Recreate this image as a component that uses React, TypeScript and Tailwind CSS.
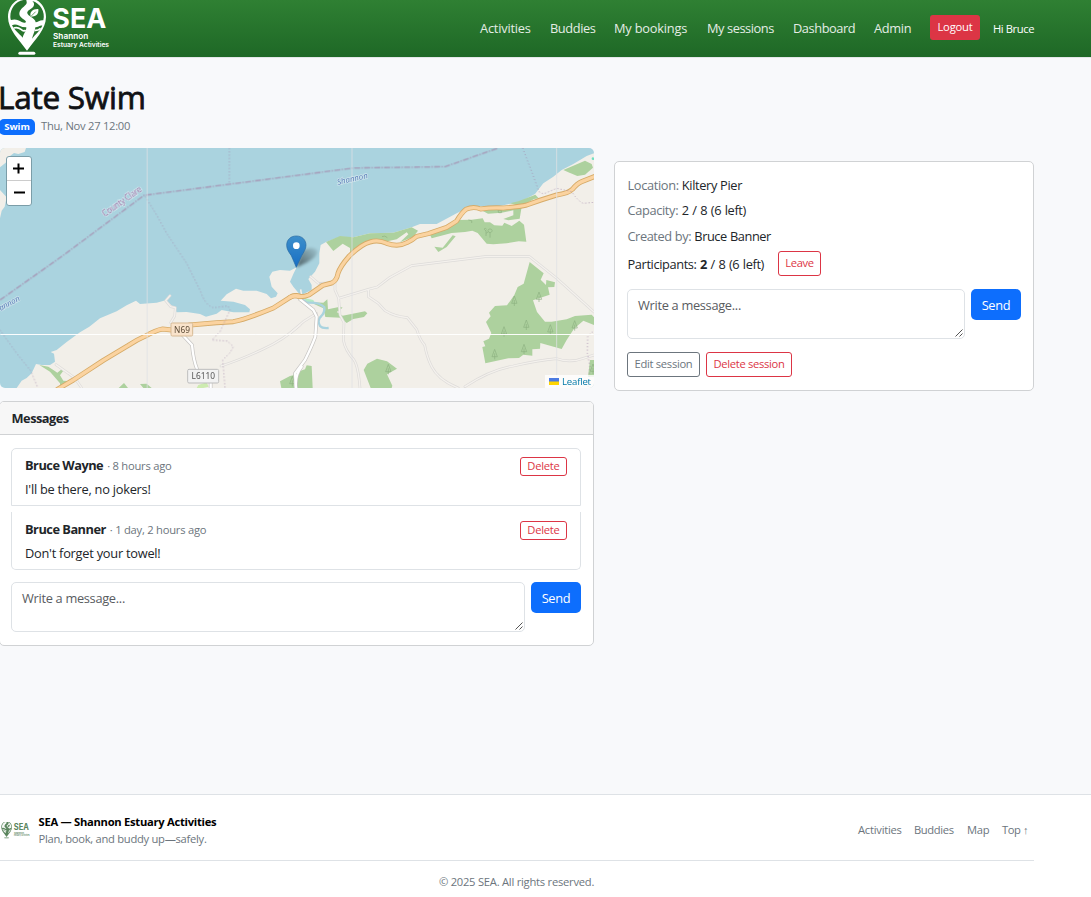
import type { ReactNode } from "react";

function LogoArt({ className, color, ground }: { className: string; color: string; ground: string }) {
  return (
    <svg viewBox="20 0 310 171" className={className} preserveAspectRatio="none">
      <path d="M80 -7C47 -7 23 18 23 51C23 88 55 118 80 152C105 118 137 88 137 51C137 18 113 -7 80 -7Z" fill={color} />
      <path d="M78 -1C49 0 30 22 30 50C30 54 31 58 32 60C45 56 54 60 64 66C70 69 76 69 77 65C74 58 58 54 57 42C57 26 75 20 79 10C80 5 77 1 78 -1Z" fill={ground} />
      <path d="M96 3C104 10 102 19 94 25C85 31 78 35 82 42C89 52 104 54 106 67C112 66 121 59 129 61C136 35 119 9 96 3Z" fill={ground} />
      <path d="M35 76C47 70 57 78 66 81L78 82C78 94 70 100 67 113C57 101 42 91 35 76Z" fill={ground} />
      <path d="M105 82C111 83 119 75 126 77C120 91 105 103 95 116C98 104 104 95 105 82Z" fill={ground} />
      <path d="M91 50C87 36 97 26 114 27C116 44 105 50 91 50Z" fill={color} />
      <path d="M92 49L106 35" stroke={ground} strokeWidth="2" />
      <path d="M40 84Q52 80 62 88T76 90M103 91Q112 92 121 85" stroke={color} strokeWidth="5" fill="none" />
      <rect x="54" y="155" width="51" height="9" rx="4.5" fill={color} />
      <g fill={color} fontFamily="Inter, sans-serif" fontWeight="700">
        <text x="156" y="85" fontSize="83" textLength="162" lengthAdjust="spacingAndGlyphs">SEA</text>
        <text x="158" y="117" fontSize="24" fontWeight="600" textLength="106" lengthAdjust="spacingAndGlyphs">Shannon</text>
        <text x="158" y="141" fontSize="19" fontWeight="600" textLength="168" lengthAdjust="spacingAndGlyphs">Estuary Activities</text>
      </g>
    </svg>
  );
}

const conifers = [[673, 482], [747, 470], [709, 554], [642, 574], [781, 568], [854, 556], [702, 627], [614, 642], [295, 687], [7, 723], [909, 686]];

function MapArt() {
  return (
    <svg viewBox="0 24 1782 720" className="block h-[240px] w-[594px]" preserveAspectRatio="none">
      <rect y="24" width="1782" height="720" fill="#aad3df" />
      <g fill="#f2efe9">
        <path d="M0 24H78L74 36L55 42L42 39L30 48L17 68L0 82ZM0 150L20 172L14 200L5 212L0 235Z" />
        <path d="M50 744L65 722L80 714L95 700L108 672L125 675L150 675L165 665L162 641L152 636L170 630L200 606L240 577L268 560L300 535L350 514L380 496L408 482L420 492L470 488L497 481L520 500L530 517L560 516L600 522L618 530L650 521L665 510L700 517L748 517L750 508L735 495L700 485L662 482L680 463L708 446L730 452L770 452L800 462L813 475L828 470L833 460L815 440L808 410L817 395L840 390L870 392L890 382L880 402L870 425L880 440L905 470V744Z" />
        <path transform="translate(870)" d="M10 744V455L28 468L40 462L65 450L65 435L55 417L75 395L88 370L88 340L92 315L108 306L150 290L190 292L240 280L310 278L365 262L390 252L440 252L500 220L530 205L550 198L620 200L690 185L735 162L760 130L790 110L815 90L850 72L890 48L912 40V744Z" />
      </g>
      <g fill="#add19e">
        <path d="M118 675L145 680L160 690L172 698L185 688L190 692L180 706L190 722L215 724L190 744H180V730L150 695ZM372 729L384 744H356ZM420 732L440 731L455 744H430ZM840 724L870 708L905 700V744H844Z" />
      </g>
      <path d="M595 735L620 727L626 740L610 744H590Z" fill="#cdebb0" />
      <g transform="translate(870)" fill="#add19e">
        <path d="M108 306L150 288L190 292L240 280L310 278L365 262L384 272L370 290L330 307L355 283L350 277L320 298L282 306L240 303L205 322L180 340V324L158 311L130 333Z" />
        <path d="M420 284L460 270L490 252L500 240L545 239L578 235L584 247L600 247L613 256L637 257L643 248L665 258L688 242L702 254L709 305L686 304L650 310L610 313L590 311L563 279L547 272L525 276L485 279L425 295ZM433 320L458 323L488 286L497 289L470 321L445 336ZM573 210L640 205L685 205L732 177L746 175L736 164L685 184L660 190L695 200L689 236L655 241L640 237L670 226V211L635 218L594 221Z" />
        <path d="M820 90L885 62L905 72L909 83L885 104L862 108L835 97Z" />
        <path d="M719 366L761 400L752 419L768 435L769 420L795 427L793 441L774 442L779 464L729 481L741 516L765 545H785L830 538L855 528L905 524L912 532V555L880 542L852 566L830 600L815 627L751 609L750 626L727 628V647L700 644L687 654L655 655L586 670L577 621L586 619L580 604L597 596L604 579L588 546L602 529L597 518L615 498L651 496L673 465L683 441L701 431Z" />
        <path d="M221 690L232 671L261 656L291 664L321 686L291 703L307 737L305 744H242ZM10 700L45 688L50 676L65 678L68 744H10ZM42 474L70 487L100 488L112 478L114 508L150 500L158 503L140 516L158 527L225 514L232 520L222 531L190 537L170 549L152 533L106 531L100 505L72 492ZM900 660H912V710H894Z" />
        <path d="M43 474L70 480L74 490L50 488Z" fill="#b5ebc3" />
        <circle cx="909" cy="56" r="4" fill="#71e0c0" />
      </g>
      <g transform="translate(870)">
        <path d="M25 467L50 488Q90 486 103 502Q105 516 94 528Q80 540 90 558Q97 566 116 564" fill="none" stroke="#aad3df" strokeWidth="7" />
        <path d="M35 466L32 448" stroke="#f2efe9" strokeWidth="5" />
        <g fill="none" stroke="#8db180" strokeWidth="2">
          {conifers.map(([x, y]) => (
            <path key={`${x}-${y}`} transform={`translate(${x} ${y})`} d="M0 -14L-8 8H8ZM0 -2V16" />
          ))}
          <path d="M588 288V272C580 270 583 260 590 268M588 280L596 275M600 293V278C591 276 593 266 600 267C609 267 608 277 600 278M535 240L545 242V249M624 211H634V218H626ZM276 290Q285 285 292 293" />
        </g>
      </g>
      <g fill="none" strokeLinecap="round" strokeLinejoin="round">
        <g stroke="#dddbd9" strokeWidth="8">
          <path d="M510 467L497 482L512 500L526 503L524 528L512 548M168 674L205 700L225 715L245 744" />
          <path d="M900 555Q850 600 790 627Q720 660 663 678" />
          <g transform="translate(870)">
            <path d="M62 410L85 430L135 428M135 428V450L146 475L150 525L162 548L160 600Q165 630 192 660Q205 680 210 744M146 475L235 448L262 441L300 412L365 377L585 350H719L800 415L912 516M235 448V470L265 490L285 512Q315 530 352 533L380 568Q390 600 404 615Q410 650 425 680Q445 720 505 744M525 740Q600 690 670 678Q750 660 800 656Q840 670 880 655L912 645M80 520L40 545L0 580" />
          </g>
        </g>
        <g stroke="#f4f1ed" strokeWidth="4">
          <path d="M510 467L497 482L512 500L526 503L524 528L512 548M168 674L205 700L225 715L245 744M900 555Q850 600 790 627Q720 660 663 678" />
          <g transform="translate(870)">
            <path d="M62 410L85 430M135 428V450L146 475L150 525L162 548L160 600Q165 630 192 660Q205 680 210 744M146 475L235 448L262 441L300 412L365 377L585 350H719L800 415L912 516M235 448V470L265 490L285 512Q315 530 352 533L380 568Q390 600 404 615Q410 650 425 680Q445 720 505 744M525 740Q600 690 670 678Q750 660 800 656Q840 670 880 655L912 645M80 520L40 545L0 580" />
          </g>
        </g>
        <g stroke="#c6c4c2" strokeWidth="11">
          <path d="M548 585L576 615Q580 660 592 690M632 720V744M905 680Q884 705 888 744" />
          <path transform="translate(870)" d="M30 478L70 510L80 530L76 590Q65 620 45 660L15 700L18 744" />
        </g>
        <g stroke="#fff" strokeWidth="7">
          <path d="M548 585L576 615Q580 660 592 690M632 720V744M905 680Q884 705 888 744" />
          <path transform="translate(870)" d="M30 478L70 510L80 530L76 590Q65 620 45 660L15 700L18 744" />
        </g>
        {[["#d6ab68", 15], ["#fbd3a0", 10]].map(([stroke, width]) => (
          <g key={stroke} stroke={stroke as string} strokeWidth={width}>
            <path d="M172 748L220 720L310 661L350 637L385 616Q410 600 435 589Q468 570 488 567L515 570L570 555L650 548L700 545Q740 537 820 504L870 472Q885 464 898 468" />
            <path transform="translate(870)" d="M0 472Q10 464 28 470Q45 470 58 464Q78 450 98 436L125 429Q140 422 144 400Q150 380 178 348Q215 312 240 306Q265 298 290 310Q325 322 350 308Q370 299 380 289L415 281L470 262L500 243Q515 218 528 208Q550 198 572 207Q605 202 640 204Q690 200 710 195Q750 180 800 165Q835 160 847 148Q862 130 875 125L918 108" />
          </g>
        ))}
      </g>
      <g fill="none" stroke="#a58bad" strokeWidth="4" opacity="0.8">
        <path strokeDasharray="18 4 4 4" d="M0 480L180 353L432 166L900 105L1060 84L1335 80L1495 24" />
        <g strokeWidth="3" strokeDasharray="3 7">
          <path d="M688 24V132M436 170L470 225L500 280L560 370L602 455Q615 495 640 503L684 498L690 510L660 575L636 600L682 603L700 620L690 638L668 660L675 744M0 570L50 640L92 692L112 740" />
          <path transform="translate(870)" d="M698 24L727 100L747 155L760 162L800 145L845 155Q865 185 880 190L912 187M908 575L893 590L892 640L900 680L894 744" />
        </g>
      </g>
      <g stroke="#fff" strokeWidth="3">
        <path d="M441.500 24V744M1056 24V744M1670 24V744" stroke="#dfe2e5" opacity="0.75" />
        <path d="M0 583.500H1782" opacity="0.95" />
      </g>
      <g fontFamily="Noto Sans, sans-serif" stroke="#fff" strokeOpacity="0.45" strokeWidth="4" paintOrder="stroke">
        <text transform="translate(315 232) rotate(-35)" fontSize="25" fill="#a07fae" textLength="138">County Clare</text>
        <text transform="translate(2 513) rotate(-29)" fontSize="24" fontStyle="italic" fill="#6284bb" textLength="68">annon</text>
        <text transform="translate(1013 135) rotate(-13)" fontSize="24" fontStyle="italic" fill="#6284bb" textLength="94">Shannon</text>
      </g>
      <g fontFamily="Noto Sans, sans-serif" fontSize="25" textAnchor="middle" strokeWidth="3">
        <rect x="513" y="549" width="65" height="39" rx="4" fill="#f9e3cb" stroke="#d6b994" />
        <text x="546" y="579" fill="#5c4b36">N69</text>
        <rect x="563" y="688" width="93" height="41" rx="4" fill="#f2f2f2" stroke="#bdbdbd" />
        <text x="610" y="718" fill="#555">L6110</text>
      </g>
      <defs>
        <linearGradient id="pin" x1="0" y1="0" x2="0" y2="1">
          <stop stopColor="#3d8fcb" />
          <stop offset="1" stopColor="#176ec4" />
        </linearGradient>
        <linearGradient id="shade" gradientUnits="userSpaceOnUse" x1="890" y1="380" x2="945" y2="325">
          <stop stopOpacity="0.55" />
          <stop offset="1" stopOpacity="0.1" />
        </linearGradient>
        <filter id="soft" x="-50%" y="-50%" width="200%" height="200%"><feGaussianBlur stdDeviation="5" /></filter>
      </defs>
      <path d="M890 382L905 335Q932 315 952 331Q956 348 922 367Z" fill="url(#shade)" filter="url(#soft)" />
      <path d="M889 382L874 347C866 336 860 327 860 316C860 298 873 288 889 288C906 288 918 299 918 316C918 328 911 336 905 347Z" fill="url(#pin)" stroke="#2768a0" strokeWidth="2" />
      <circle cx="889" cy="317" r="10" fill="#fff" />
    </svg>
  );
}

function Composer({ className }: { className: string }) {
  return (
    <div className={`flex items-start gap-[6px] ${className}`}>
      <div className="flex h-[50px] flex-1 items-end justify-between rounded-[5px] border border-[#dee2e6] bg-white">
        <span className="self-start pt-[6px] pl-[10px] leading-[19px] tracking-[-0.3px] text-[#595c5f]">Write a message...</span>
        <svg viewBox="0 0 8 8" className="mr-[1px] mb-[1px] size-2">
          <path d="M0.500 7.500L7.500 0.500M4.500 7.500L7.500 4.500" stroke="#555" fill="none" />
        </svg>
      </div>
      <button className="h-[31px] w-[50px] rounded-[5px] bg-[#0d6efd] pt-[2px] text-[12.8px] tracking-[-0.3px] text-white">Send</button>
    </div>
  );
}

function Message({ name, when, children, className }: { name: string; when: string; children: ReactNode; className: string }) {
  return (
    <li className={`flex h-[58px] items-start justify-between border-x border-[#dee2e6] px-[13px] ${className}`}>
      <div>
        <div className="flex h-[19px] items-center">
          <span className="font-bold tracking-[-0.5px]">{name}</span>
          <span className="ml-[4px] text-[11.2px] tracking-[-0.24px] text-[#6c757d]">· {when}</span>
        </div>
        <p className="mt-[5px] leading-[19px] tracking-[-0.24px]">{children}</p>
      </div>
      <button className="mt-[1px] flex h-[19px] w-[47px] items-center justify-center rounded-[3px] border border-[#dc3545] pb-[2px] text-[11.2px] tracking-[-0.25px] text-[#dc3545]">Delete</button>
    </li>
  );
}

export default function App() {
  return (
    <div className="flex h-[897px] w-full flex-col overflow-hidden bg-[#f8f9fb] font-['Open_Sans',sans-serif] text-[12.8px] leading-[19px] text-[#212529]">
      <header className="flex h-[57px] shrink-0 justify-between bg-linear-to-b from-[#2f8033] to-[#1e6826] pr-[57px]">
        <LogoArt className="ml-[6.67px] h-[57px] w-[103.33px]" color="#ffffff" ground="#28742d" />
        <nav className="flex h-[57px] items-center text-[#e4ede5]">
          <a className="w-[70px] tracking-[-0.2px]">Activities</a>
          <a className="w-[64px] tracking-[-0.4px]">Buddies</a>
          <a className="w-[93px] tracking-[-0.2px]">My bookings</a>
          <a className="w-[86px] tracking-[-0.42px]">My sessions</a>
          <a className="w-[81px] tracking-[-0.42px]">Dashboard</a>
          <a className="w-[56px] tracking-[-0.32px]">Admin</a>
          <button className="mb-[2px] h-[25px] w-[50px] rounded-[3px] bg-[#dc3545] pb-[2px] text-[11.2px] tracking-[-0.2px] text-white">Logout</button>
          <span className="ml-[13px] w-[41px] pb-[1px] text-[11.2px] tracking-[-0.4px] whitespace-nowrap text-white">Hi Bruce</span>
        </nav>
      </header>
      <main className="h-[737px] shrink-0 border-t border-[#e3e7e8] pt-[22px]">
        <h1 className="-ml-[2px] h-[37px] text-[31.5px] leading-[34px] tracking-[-0.25px] text-[#101214] [-webkit-text-stroke:0.8px_#101214]">Late Swim</h1>
        <div className="-ml-px flex h-[19px] items-center">
          <span className="flex h-[16px] w-[36px] items-center justify-center rounded-[5px] bg-[#0d6efd] text-[9.6px] font-bold tracking-[-0.1px] text-white">Swim</span>
          <span className="ml-[6px] pb-[2px] text-[11.2px] tracking-[-0.26px] text-[#6c757d]">Thu, Nov 27 12:00</span>
        </div>
        <div className="mt-[12px] flex items-start gap-[20px]">
          <div className="w-[594px] shrink-0">
            <div className="relative h-[240px] overflow-hidden rounded-[5px]">
              <MapArt />
              <div className="absolute top-[8px] left-[6px] h-[50px] w-[26px] overflow-hidden rounded-[3px] border border-[#7b9da8] bg-white">
                <div className="flex h-[24px] items-center justify-center border-b border-[#ccc]">
                  <svg viewBox="0 0 11 11" className="mr-px size-[11px]"><path d="M0 5.500H11M5.500 0.500V10.500" stroke="#000" strokeWidth="2" /></svg>
                </div>
                <div className="flex h-[24px] items-center justify-center">
                  <svg viewBox="0 0 11 11" className="mb-px size-[11px]"><path d="M0 5.500H11" stroke="#000" strokeWidth="2" /></svg>
                </div>
              </div>
              <div className="absolute right-0 bottom-0 flex h-[13px] w-[49px] items-center gap-[3px] bg-white/80 pl-[4px] text-[9.6px] text-[#0078a8]">
                <svg viewBox="0 0 10 7" className="h-[7px] w-[10px]"><path d="M0 0H10V4H0Z" fill="#4c7be1" /><path d="M0 3.500H10V7H0Z" fill="#ffd500" /></svg>
                <span className="text-[9.6px] tracking-[-0.2px]">Leaflet</span>
              </div>
            </div>
            <section className="mt-[13px] -ml-px h-[245px] rounded-[5px] border border-[#d0d2d4] bg-white">
              <h2 className="flex h-[33px] items-center rounded-t-[4px] border-b border-[#d0d2d4] bg-[#f7f7f7] pl-[11.5px] font-bold tracking-[-0.5px]">Messages</h2>
              <ul className="mt-[13px] mr-[12px] ml-[11px]">
                <Message name="Bruce Wayne" when="8 hours ago" className="rounded-t-[5px] border-y pt-[7px]">I'll be there, no jokers!</Message>
                <Message name="Bruce Banner" when="1 day, 2 hours ago" className="mt-[6px] rounded-b-[5px] border-b pt-[8px]">Don't forget your towel!</Message>
              </ul>
              <Composer className="mt-[12px] mr-[12px] ml-[11px]" />
            </section>
          </div>
          <section className="mt-[13px] h-[230px] w-[420px] rounded-[5px] border border-[#d0d2d4] bg-white px-[12px] pt-[14px]">
            <p className="mb-[6px] pl-[0.5px] tracking-[-0.34px]"><span className="text-[#6c757d]">Location:</span> Kiltery Pier</p>
            <p className="mb-[7px] pl-[0.5px] tracking-[-0.35px] [word-spacing:0.6px]"><span className="text-[#6c757d]">Capacity:</span> 2 / 8 (6 left)</p>
            <p className="mb-[5px] pl-[0.5px] tracking-[-0.45px] [word-spacing:0.4px]"><span className="text-[#6c757d]">Created by:</span> Bruce Banner</p>
            <div className="flex h-[25px] items-center">
              <span className="w-[151px] pt-[2px] pl-[0.5px] tracking-[-0.38px] whitespace-nowrap [word-spacing:0.6px]">Participants: <b>2</b> / 8 (6 left)</span>
              <button className="h-[25px] w-[43px] rounded-[3px] border border-[#dc3545] pb-[2px] text-[11.2px] tracking-[-0.3px] text-[#dc3545]">Leave</button>
            </div>
            <Composer className="mt-[13px]" />
            <div className="mt-[13px] flex gap-[6px] text-[11.2px] tracking-[-0.3px]">
              <button className="h-[25px] w-[73px] rounded-[3px] border border-[#6c757d] pb-[2px] text-[#6c757d]">Edit session</button>
              <button className="h-[25px] w-[86px] rounded-[3px] border border-[#dc3545] pb-[2px] text-[#dc3545]">Delete session</button>
            </div>
          </section>
        </div>
      </main>
      <footer className="h-[103px] shrink-0 border-t border-[#dee2e6] bg-white text-[11.2px] text-[#6c757d]">
        <div className="flex h-[66px] w-[1034px] items-center border-b border-[#dee2e6] pt-[5px]">
          <LogoArt className="ml-[0.5px] h-[17px] w-[29px]" color="#5a855d" ground="#f3f7f3" />
          <div className="ml-[9px] leading-[17px]">
            <p className="font-bold tracking-[-0.27px] text-black">SEA — Shannon Estuary Activities</p>
            <p className="tracking-[-0.28px]">Plan, book, and buddy up—safely.</p>
          </div>
          <nav className="ml-auto flex w-[176px] pb-[1px]">
            <a className="w-[56px] tracking-[-0.24px]">Activities</a>
            <a className="w-[53px] tracking-[-0.36px]">Buddies</a>
            <a className="w-[35px] tracking-[-0.3px]">Map</a>
            <a className="whitespace-nowrap tracking-[-0.4px]">Top ↑</a>
          </nav>
        </div>
        <p className="mt-[11px] w-[1033px] text-center tracking-[-0.24px]">© 2025 SEA. All rights reserved.</p>
      </footer>
    </div>
  );
}
